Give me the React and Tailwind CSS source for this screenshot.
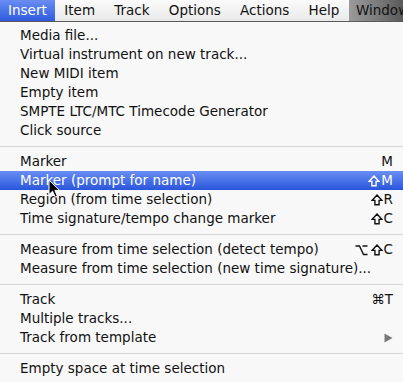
import React from 'react';

const menuBar = ['Item', 'Track', 'Options', 'Actions', 'Help'];

const sections = [
  [
    { label: 'Media file...' },
    { label: 'Virtual instrument on new track...' },
    { label: 'New MIDI item' },
    { label: 'Empty item' },
    { label: 'SMPTE LTC/MTC Timecode Generator' },
    { label: 'Click source' },
  ],
  [
    { label: 'Marker', key: 'M' },
    { label: 'Marker (prompt for name)', key: 'M', shift: true, active: true },
    { label: 'Region (from time selection)', key: 'R', shift: true },
    { label: 'Time signature/tempo change marker', key: 'C', shift: true },
  ],
  [
    { label: 'Measure from time selection (detect tempo)', key: 'C', shift: true, alt: true },
    { label: 'Measure from time selection (new time signature)...' },
  ],
  [
    { label: 'Track', key: '⌘T' },
    { label: 'Multiple tracks...' },
    { label: 'Track from template', submenu: true },
  ],
  [{ label: 'Empty space at time selection' }],
];

const ShiftIcon = () => (
  <svg width="12" height="12" viewBox="0 0 12 12" className="mr-[1px]">
    <path
      d="M6 1 L11 6.4 L8.1 6.4 L8.1 10.8 L3.9 10.8 L3.9 6.4 L1 6.4 Z"
      fill="none"
      stroke="currentColor"
      strokeWidth="1.4"
      strokeLinejoin="miter"
    />
  </svg>
);

const AltIcon = () => (
  <svg width="13" height="12" viewBox="0 0 13 12" className="mr-[3px]">
    <path d="M0.5 2 L4.5 2 L8.5 10.5 L12.5 10.5 M7.5 2 L12.5 2" fill="none" stroke="currentColor" strokeWidth="1.4" />
  </svg>
);

const Cursor = () => (
  <svg className="absolute left-[48px] top-[179px]" width="13" height="20" viewBox="0 0 13 20">
    <path
      d="M1 1 L1 15.5 L4.6 12.2 L7.2 18.2 L9.4 17.2 L6.9 11.4 L11.6 11.4 Z"
      fill="#000"
      stroke="#fff"
      strokeWidth="1"
      strokeLinejoin="round"
    />
  </svg>
);

const Row = ({ item }) => (
  <div
    className={`flex h-[19px] items-center justify-between pl-[20px] pr-[10px] ${
      item.active ? 'bg-gradient-to-b from-[#6a8df3] to-[#2a55dc] text-white' : 'text-[#111]'
    }`}
  >
    <span className="whitespace-nowrap">{item.label}</span>
    {item.key && (
      <span className="flex items-center whitespace-nowrap">
        {item.alt && <AltIcon />}
        {item.shift && <ShiftIcon />}
        {item.key}
      </span>
    )}
    {item.submenu && (
      <svg width="9" height="10" viewBox="0 0 9 10">
        <path d="M0.5 0.5 L8.5 5 L0.5 9.5 Z" fill="#7a7a7a" />
      </svg>
    )}
  </div>
);

export default function App() {
  return (
    <div className="relative h-[382px] w-[403px] overflow-hidden bg-[#f8f8f8] font-['DejaVu_Sans',sans-serif] text-[13.5px] leading-[19px]">
      <div className="flex h-[22px] items-stretch border-b border-[#5a5a5a] bg-gradient-to-b from-[#fbfbfb] to-[#e9e9e9]">
        <div className="flex items-center bg-gradient-to-b from-[#6a8df3] to-[#2f5ade] px-[8px] text-white">
          Insert
        </div>
        {menuBar.map((m) => (
          <div key={m} className="flex items-center px-[9.6px] text-[#111]">
            {m}
          </div>
        ))}
        <div className="flex min-w-0 flex-1 items-center overflow-hidden bg-gradient-to-r from-[#9a9a9a] via-[#7d7d7d] to-[#5a5a5a] pl-[7px] text-[#111]">
          <span className="whitespace-nowrap">Window</span>
        </div>
      </div>

      <div className="pt-[4px]">
        {sections.map((sec, i) => (
          <div key={i}>
            {i > 0 && (
              <div className="flex h-[12px] items-center">
                <div className="h-px w-full bg-[#d6d6d6]" />
              </div>
            )}
            {sec.map((item) => (
              <Row key={item.label} item={item} />
            ))}
          </div>
        ))}
      </div>

      <Cursor />
    </div>
  );
}
